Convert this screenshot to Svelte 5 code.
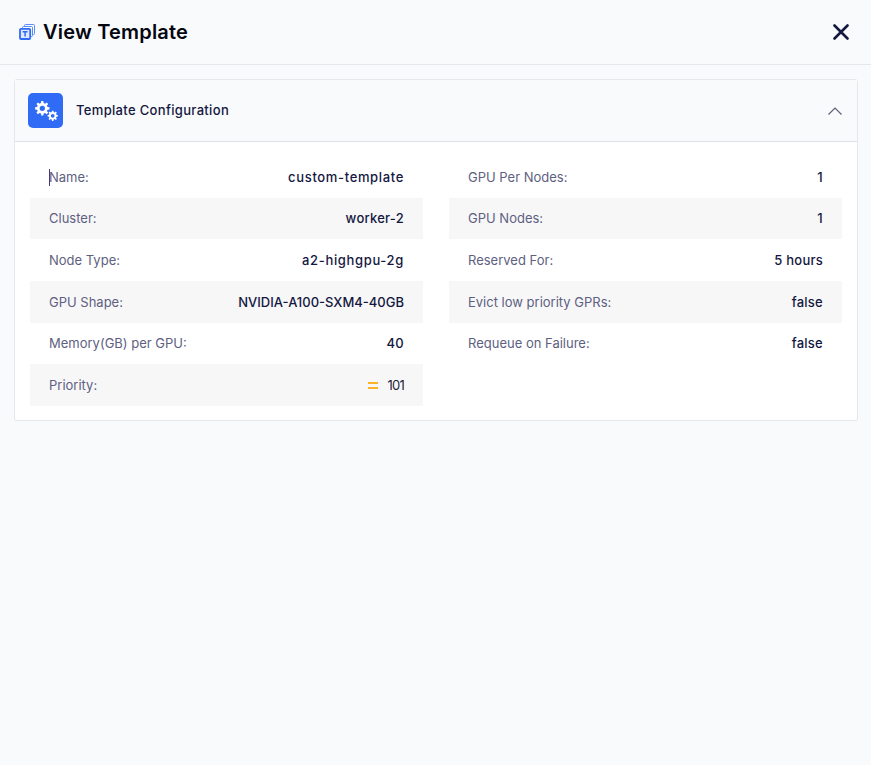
<script lang="ts">
  const left = [
    { label: "Name:", value: "custom-template", fit: "wide" },
    { label: "Cluster:", value: "worker-2" },
    { label: "Node Type:", value: "a2-highgpu-2g", fit: "wide" },
    { label: "GPU Shape:", value: "NVIDIA-A100-SXM4-40GB", fit: "tight" },
    { label: "Memory(GB) per GPU:", value: "40" },
    { label: "Priority:", value: "101", priority: true }
  ];
  const right = [
    { label: "GPU Per Nodes:", value: "1" },
    { label: "GPU Nodes:", value: "1" },
    { label: "Reserved For:", value: "5 hours" },
    { label: "Evict low priority GPRs:", value: "false" },
    { label: "Requeue on Failure:", value: "false" }
  ];

  // toothed outline plus a round hole, filled with evenodd
  function gear(cx: number, cy: number, r: number) {
    const teeth = 8;
    const inner = r * 0.74;
    const hole = r * 0.36;
    const step = (Math.PI * 2) / teeth;
    let d = "";
    for (let i = 0; i < teeth; i++) {
      const a = i * step;
      const pts = [
        [inner, a - step * 0.32],
        [r, a - step * 0.19],
        [r, a + step * 0.19],
        [inner, a + step * 0.32]
      ];
      for (const [rad, ang] of pts) {
        d += `${d ? "L" : "M"}${(cx + rad * Math.cos(ang)).toFixed(2)} ${(cy + rad * Math.sin(ang)).toFixed(2)}`;
      }
    }
    d += `ZM${cx - hole} ${cy}a${hole} ${hole} 0 1 0 ${hole * 2} 0a${hole} ${hole} 0 1 0 ${-hole * 2} 0Z`;
    return d;
  }
</script>

{#snippet column(rows)}
  <div class="column">
    {#each rows as row}
      <div class="row">
        <span class="label">{row.label}</span>
        <span class="value">
          {#if row.priority}<span class="equals"></span>{/if}
          <span class={row.fit} class:plain={row.priority}>{row.value}</span>
        </span>
      </div>
    {/each}
  </div>
{/snippet}

<div class="page">
  <header class="top">
    <div class="title">
      <svg class="copy" viewBox="0 0 16 16" width="16" height="16" fill="none" stroke="#2f6bf5">
        <path d="M5.500 2.500V1.500a1 1 0 0 1 1-1h8a1 1 0 0 1 1 1v8a1 1 0 0 1-1 1H14" stroke="#5b8cf7" />
        <path d="M3.500 4V3.500a1 1 0 0 1 1-1h8a1 1 0 0 1 1 1v8a1 1 0 0 1-1 1H12" stroke="#5b8cf7" />
        <rect x="1" y="4.800" width="10.200" height="10.200" rx="1" stroke-width="1.800" fill="#dfe8fd" />
        <path d="M3.600 7.800h5M6.100 7.800v4.800" stroke-width="1.500" />
      </svg>
      <h1>View Template</h1>
    </div>
    <button class="close" aria-label="Close">
      <svg viewBox="0 0 16 16" width="16" height="16" fill="none" stroke="#14173f" stroke-width="2.600" stroke-linecap="round">
        <path d="M1.500 1.500l13 13M14.500 1.500l-13 13" />
      </svg>
    </button>
  </header>

  <section class="card">
    <div class="card-head">
      <div class="head-left">
        <div class="gears">
          <svg viewBox="0 0 35 35" width="35" height="35" fill="#fff" fill-rule="evenodd">
            <path d={gear(14.300, 15.300, 7.300)} />
            <path d={gear(24.700, 22.800, 5.200)} />
          </svg>
        </div>
        <span class="head-title">Template Configuration</span>
      </div>
      <svg class="chevron" viewBox="0 0 14 8" width="14" height="8" fill="none" stroke="#5e6078" stroke-width="1.200">
        <path d="M.5 7.500L7 1l6.500 6.500" />
      </svg>
    </div>
    <div class="card-body">
      <span class="caret"></span>
      {@render column(left)}
      {@render column(right)}
    </div>
  </section>
</div>

<style>
  :global(body) {
    margin: 0;
    background: #f9fafc;
  }

  .page {
    min-height: 765px;
    background: #f9fafc;
    font-family: "Inter", "Open Sans", sans-serif;
  }

  .top {
    height: 64px;
    display: flex;
    align-items: center;
    justify-content: space-between;
    padding: 0 22px 0 19px;
    border-bottom: 1px solid #e6e7ec;
  }

  .title {
    display: flex;
    align-items: center;
    gap: 8px;
  }

  .copy {
    display: block;
  }

  h1 {
    margin: 0;
    font-size: 20px;
    font-weight: 600;
    letter-spacing: 0.2px;
    color: #05060f;
  }

  .close {
    border: none;
    background: transparent;
    padding: 0;
    display: flex;
  }

  .card {
    margin: 14px 13px 0 14px;
    border: 1px solid #e6e7ec;
    border-radius: 3px;
    background: #fff;
  }

  .card-head {
    height: 61px;
    display: flex;
    align-items: center;
    justify-content: space-between;
    padding: 0 15px 0 13px;
    background: #f9fafc;
    border-bottom: 1px solid #dfe0e7;
  }

  .head-left {
    display: flex;
    align-items: center;
    gap: 13px;
  }

  .gears {
    width: 35px;
    height: 35px;
    border-radius: 5px;
    background: #2f6bf5;
    display: flex;
  }

  .head-title {
    font-size: 13px;
    font-weight: 500;
    letter-spacing: 0.33px;
    color: #14173f;
    margin-bottom: 1px;
  }

  .card-body {
    position: relative;
    display: grid;
    grid-template-columns: 393px 393px;
    justify-content: space-between;
    padding: 14px 15px;
  }

  .caret {
    position: absolute;
    left: 34px;
    top: 27px;
    width: 1px;
    height: 17px;
    background: #4d3a78;
  }

  .row {
    height: 41.660px;
    display: flex;
    align-items: center;
    justify-content: space-between;
    padding: 0 19px;
    font-size: 13px;
  }

  .row:nth-child(even) {
    background: #f7f7f8;
  }

  .label {
    color: #5e5f81;
  }

  .value {
    display: flex;
    align-items: center;
    gap: 10px;
    font-weight: 500;
    letter-spacing: 0.25px;
    color: #14173f;
  }

  .wide {
    letter-spacing: 0.65px;
  }

  .tight {
    letter-spacing: 0;
  }

  .plain {
    font-weight: 400;
    letter-spacing: -0.8px;
    color: #23243a;
  }

  .equals {
    width: 10px;
    height: 3px;
    border-top: 2px solid #fbb32c;
    border-bottom: 2px solid #fbb32c;
  }
</style>
